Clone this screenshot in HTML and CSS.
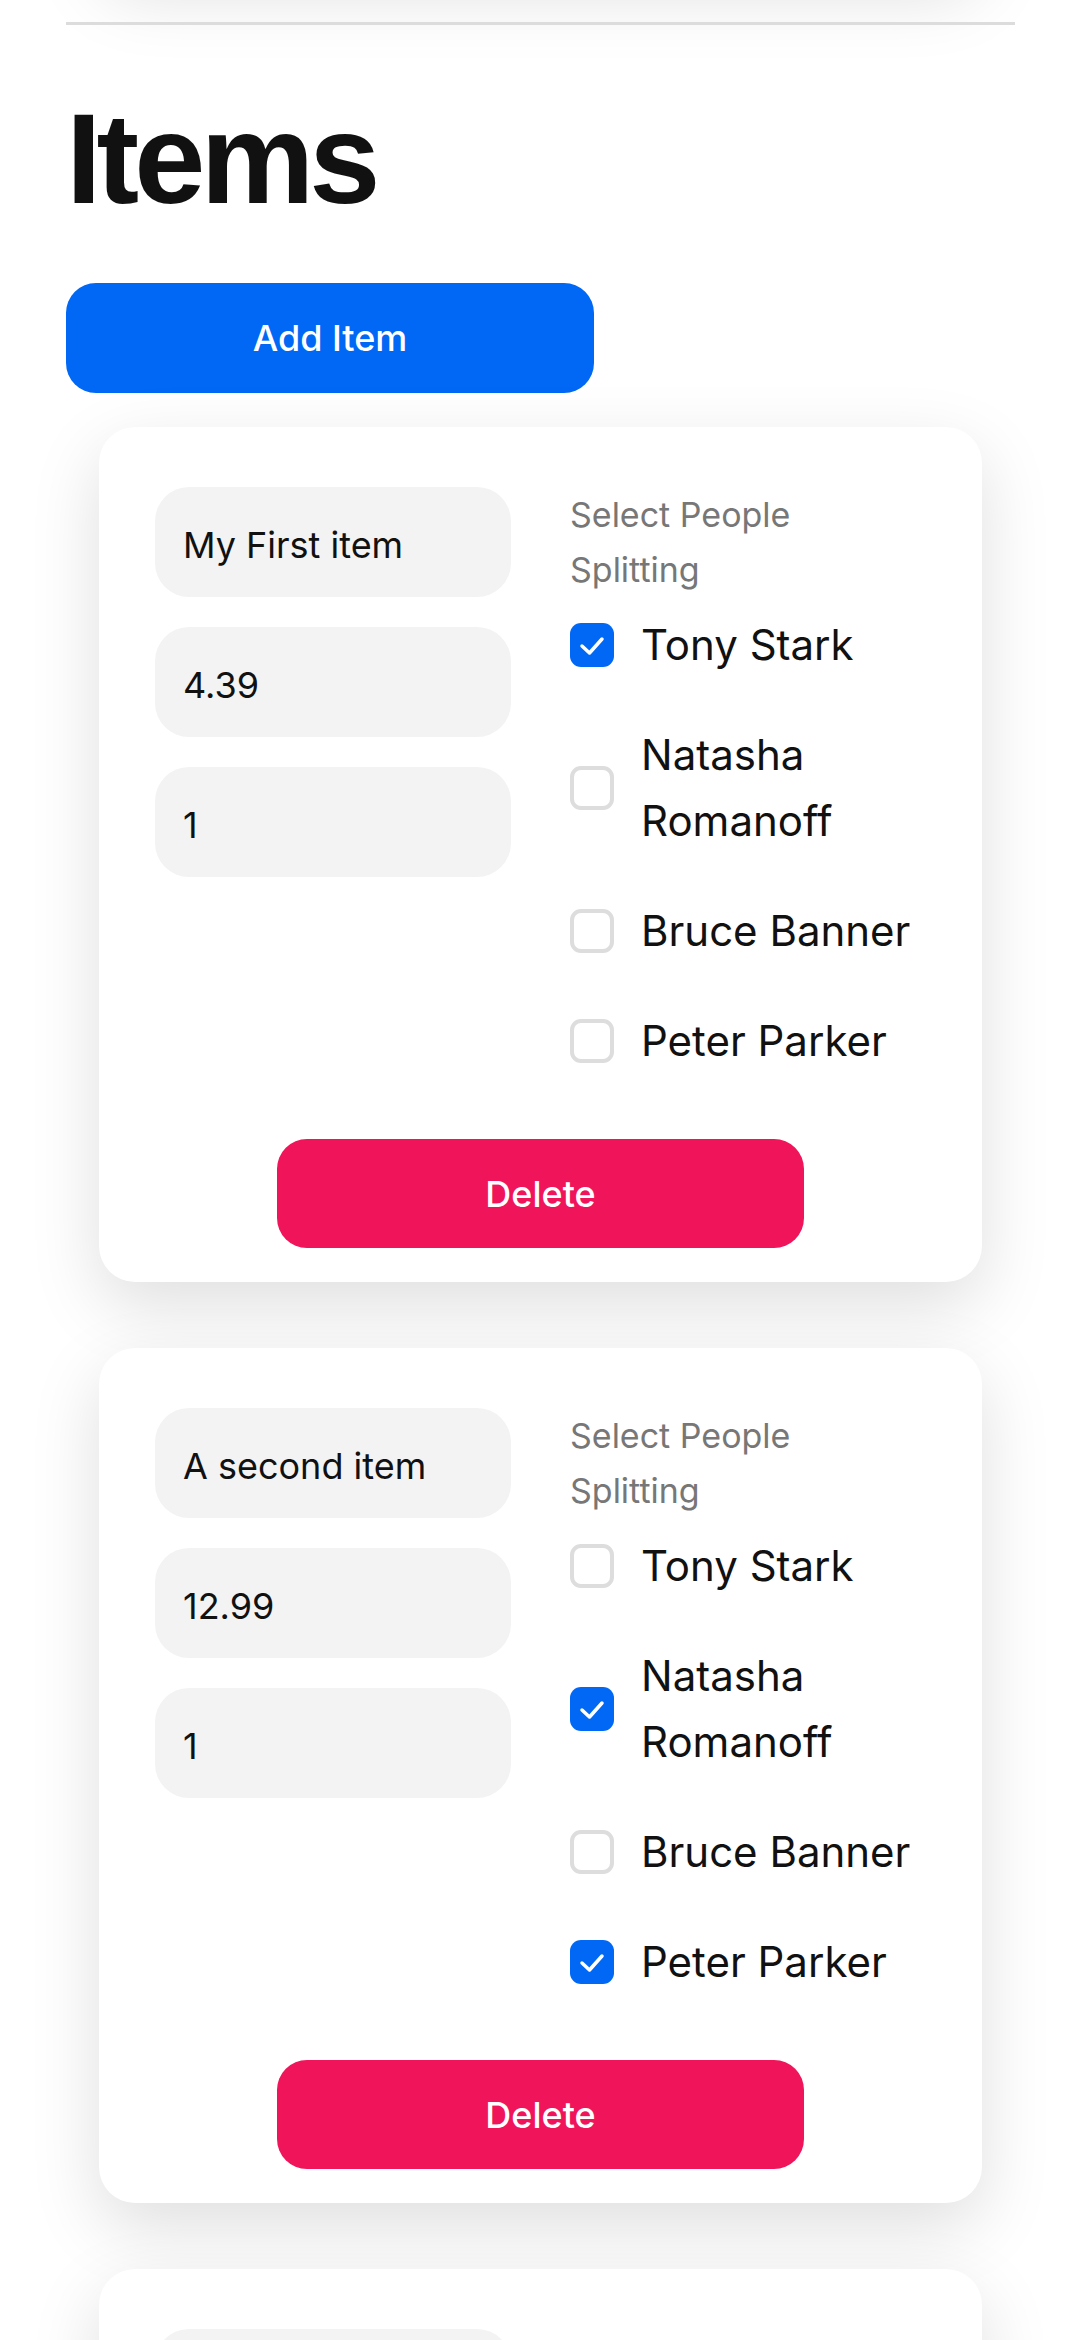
FILE: index.html
```html
<!DOCTYPE html>
<html lang="en">
<head>
    <meta charset="UTF-8">
    <meta name="viewport" content="width=device-width, initial-scale=1.0">
    <title>Items</title>
    <link rel="stylesheet" href="styles.css">
</head>
<body>
    <main class="page">
        <!-- bottom of the people card, scrolled above -->
        <div class="prev-card"></div>
        <div class="divider"></div>

        <h1 class="title">Items</h1>
        <button class="btn btn-add">Add Item</button>

        <div class="item-list">
            <div class="item-card">
                <div class="item-grid">
                    <div class="fields">
                        <input class="field" type="text" value="My First item">
                        <input class="field" type="text" value="4.39">
                        <input class="field" type="text" value="1">
                    </div>
                    <div class="people">
                        <p class="people-label">Select People Splitting</p>
                        <div class="person-list">
                            <label class="person">
                                <span class="box checked"><svg viewBox="0 0 44 44"><polyline points="12,23 19.5,30 32,16"/></svg></span>
                                <span class="name">Tony Stark</span>
                            </label>
                            <label class="person">
                                <span class="box"></span>
                                <span class="name">Natasha Romanoff</span>
                            </label>
                            <label class="person">
                                <span class="box"></span>
                                <span class="name">Bruce Banner</span>
                            </label>
                            <label class="person">
                                <span class="box"></span>
                                <span class="name">Peter Parker</span>
                            </label>
                        </div>
                    </div>
                </div>
                <button class="btn btn-delete">Delete</button>
            </div>

            <div class="item-card">
                <div class="item-grid">
                    <div class="fields">
                        <input class="field" type="text" value="A second item">
                        <input class="field" type="text" value="12.99">
                        <input class="field" type="text" value="1">
                    </div>
                    <div class="people">
                        <p class="people-label">Select People Splitting</p>
                        <div class="person-list">
                            <label class="person">
                                <span class="box"></span>
                                <span class="name">Tony Stark</span>
                            </label>
                            <label class="person">
                                <span class="box checked"><svg viewBox="0 0 44 44"><polyline points="12,23 19.5,30 32,16"/></svg></span>
                                <span class="name">Natasha Romanoff</span>
                            </label>
                            <label class="person">
                                <span class="box"></span>
                                <span class="name">Bruce Banner</span>
                            </label>
                            <label class="person">
                                <span class="box checked"><svg viewBox="0 0 44 44"><polyline points="12,23 19.5,30 32,16"/></svg></span>
                                <span class="name">Peter Parker</span>
                            </label>
                        </div>
                    </div>
                </div>
                <button class="btn btn-delete">Delete</button>
            </div>

            <!-- third item, only its top is on screen -->
            <div class="item-card">
                <div class="item-grid">
                    <div class="fields">
                        <input class="field" type="text" value="">
                        <input class="field" type="text" value="">
                        <input class="field" type="text" value="">
                    </div>
                    <div class="people"></div>
                </div>
            </div>
        </div>
    </main>
</body>
</html>
```

FILE: styles.css
```css
body {
    margin: 0;
    padding: 0;
    background-color: #ffffff;
    color: #111;
    font-family: Inter, "Noto Sans", sans-serif;
    overflow: hidden;
}
.page {
    padding: 0 66px;
}
.prev-card {
    height: 100px;
    margin: -130px 33px 0;
    background-color: #ffffff;
    border-radius: 36px;
    box-shadow: 0 24px 70px rgba(0, 0, 0, 0.13);
}
.divider {
    position: relative;
    height: 3px;
    margin-top: 52px;
    background-color: #dcdcdc;
}
.title {
    margin: 70px 0 60px;
    font-family: "Liberation Sans", Arial, sans-serif;
    font-size: 128px;
    line-height: 128px;
    font-weight: 700;
    letter-spacing: -5px;
    color: #111;
}
.btn {
    display: block;
    border: none;
    border-radius: 30px;
    color: white;
    font-family: Inter, "Noto Sans", sans-serif;
    font-size: 36px;
    font-weight: 500;
    cursor: pointer;
}
.btn-add {
    width: 528px;
    height: 110px;
    margin-bottom: 34px;
    background-color: #0068f5;
}
.btn-delete {
    width: 527px;
    height: 109px;
    margin: 65px auto 0;
    background-color: #f0145a;
}
.item-list {
    display: flex;
    flex-direction: column;
    gap: 66px;
    padding: 0 33px;
}
.item-card {
    padding: 60px 56px 34px;
    background-color: #ffffff;
    border-radius: 36px;
    box-shadow: 0 24px 70px rgba(0, 0, 0, 0.13);
}
.item-grid {
    display: grid;
    grid-template-columns: 1fr 1fr;
    gap: 59px;
    align-items: start;
}
.fields {
    display: flex;
    flex-direction: column;
    gap: 30px;
}
.field {
    box-sizing: border-box;
    width: 100%;
    height: 110px;
    padding: 5px 28px 0;
    border: none;
    border-radius: 34px;
    background-color: #f3f3f3;
    color: #111;
    font-family: Inter, "Noto Sans", sans-serif;
    font-size: 36px;
    outline: none;
}
.people-label {
    max-width: 300px;
    margin: 0 0 15px;
    font-size: 34px;
    line-height: 55px;
    color: #777;
}
.person-list {
    display: flex;
    flex-direction: column;
    gap: 44px;
}
.person {
    display: flex;
    align-items: center;
    gap: 27px;
}
.box {
    flex: none;
    box-sizing: border-box;
    width: 44px;
    height: 44px;
    border: 4px solid #dddddd;
    border-radius: 11px;
    background-color: #ffffff;
}
.box.checked {
    border: none;
    background-color: #0068f5;
}
.box svg {
    display: block;
    width: 44px;
    height: 44px;
    fill: none;
    stroke: white;
    stroke-width: 3.5;
    stroke-linecap: round;
    stroke-linejoin: round;
}
.name {
    font-size: 42px;
    line-height: 66px;
    color: #111;
}
```
